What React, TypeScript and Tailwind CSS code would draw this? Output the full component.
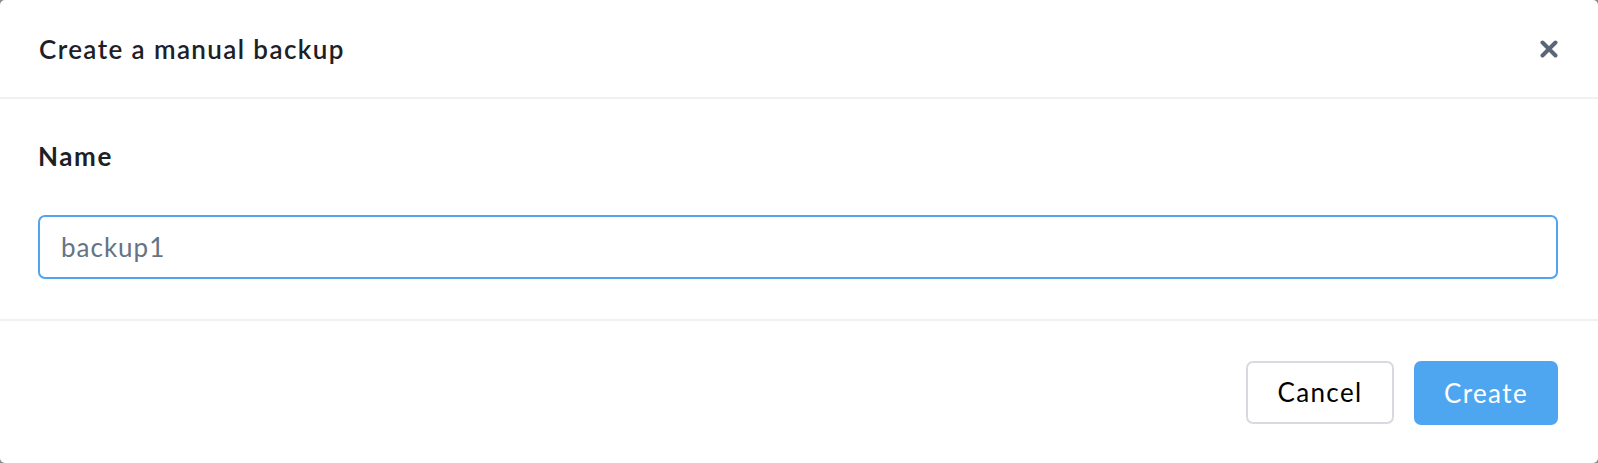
export default function App() {
  return (
    <div className="w-[1598px] h-[463px] bg-[#8a8a8a]" style={{ fontFamily: "Lato, 'Open Sans', sans-serif" }}>
      <div className="w-full h-full bg-white rounded-[5px] flex flex-col">
        {/* Header */}
        <div className="h-[99px] flex items-center justify-between pl-[39px] pr-[40px] border-b-2 border-[#f1f1f1] shrink-0">
          <h2 className="text-[26px] font-semibold tracking-[1.4px] text-[#1d2126] leading-none">
            Create a manual backup
          </h2>
          <button className="text-[#5b6778] w-[18px] h-[18px]">
            <svg viewBox="0 0 18 18" width="18" height="18">
              <path d="M2.5 2.5 L15.5 15.5 M15.5 2.5 L2.5 15.5" stroke="currentColor" strokeWidth="4" strokeLinecap="round" />
            </svg>
          </button>
        </div>

        {/* Body */}
        <div className="pl-[38px] pr-[40px] pt-[42px] h-[222px] border-b-2 border-[#f1f1f1] shrink-0">
          <label className="block text-[26px] font-bold tracking-[1.6px] text-[#1d2126] leading-[31px]">Name</label>
          <input
            defaultValue="backup1"
            className="mt-[43px] w-full h-[64px] rounded-[7px] border-2 border-[#4fa5ee] px-[21px] text-[26px] tracking-[1px] text-[#667384] outline-none"
          />
        </div>

        {/* Footer */}
        <div className="flex-1 flex items-start justify-end gap-[20px] pr-[40px] pt-[40px]">
          <button className="w-[148px] h-[63px] rounded-[7px] border-2 border-[#d7dade] bg-white text-[26px] tracking-[1.4px] text-black">
            Cancel
          </button>
          <button className="w-[144px] h-[64px] rounded-[7px] bg-[#4fa6f0] text-[26px] tracking-[1.4px] text-white">
            Create
          </button>
        </div>
      </div>
    </div>
  );
}
